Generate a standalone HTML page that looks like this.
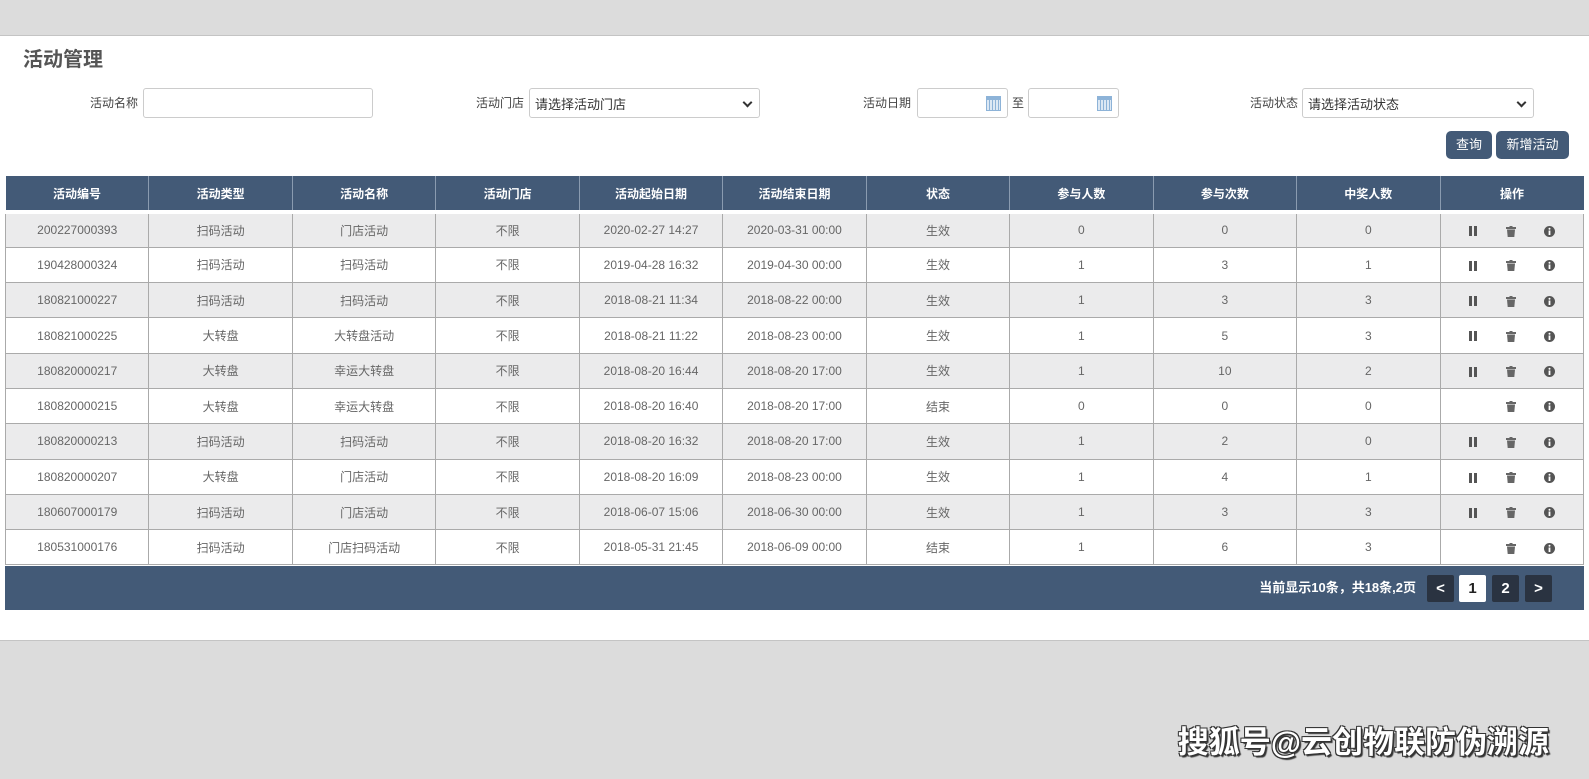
<!DOCTYPE html>
<html><head><meta charset="utf-8"><style>
*{box-sizing:border-box;margin:0;padding:0}
body{width:1589px;height:779px;background:#dcdcdc;font-family:"Liberation Sans","Noto Sans CJK SC",sans-serif;position:relative;overflow:hidden;color:#666}
.main{position:absolute;left:0;top:35px;width:1589px;height:606px;background:#fff;border-top:1px solid #c4c4c4;border-bottom:1px solid #c4c4c4}
.abs{position:absolute}
.title{left:23px;top:7px;font-size:20px;font-weight:bold;color:#555}
.lbl{font-size:12px;color:#444;top:58px}
.inp{height:30px;border:1px solid #ccc;border-radius:3px;background:#fff;top:52px}
.sel{font-size:13px;color:#333;padding:5px 5px}
.sel:after{content:"";position:absolute;right:8px;top:10px;width:5px;height:5px;border-right:2px solid #333;border-bottom:2px solid #333;transform:rotate(45deg)}
.cal{position:absolute;right:6px;top:7px;width:15px;height:15px;border:1px solid #8db3d8;background:repeating-linear-gradient(90deg,#dce8f4 0 2px,#8db3d8 2px 3px);border-top:4px solid #8db3d8}
.btn{top:95px;height:28px;background:#435a77;color:#fff;font-size:13px;border-radius:5px;text-align:center;line-height:28px}
table{position:absolute;left:5px;top:140px;width:1579px;border-collapse:collapse;table-layout:fixed}
th{background:#435a77;color:#fff;font-size:12px;font-weight:bold;height:36px;border-left:1px solid #8a9bb0;border-bottom:4px solid #fff}
td{height:35.3px;font-size:12px;color:#666;text-align:center;border:1px solid #aaa}
tbody tr:nth-child(odd) td{background:#ebebec}
.foot{left:5px;top:530px;width:1579px;height:44px;background:#435a77}
.pinfo{right:168px;top:11px;color:#fff;font-size:13px;font-weight:bold}
.pb{top:9px;width:27px;height:27px;background:#2a3341;color:#fff;font-weight:bold;font-size:15px;text-align:center;line-height:27px;border-radius:2px}
.ic{display:inline-block;vertical-align:middle;margin:0 14px}
.wm{right:40px;top:717px;font-size:31px;color:#fff;font-weight:bold;text-shadow:1px 1px 0 #333,-1px -1px 0 #333,1px -1px 0 #333,-1px 1px 0 #333,2px 2px 1px #333}
</style></head><body>
<div class="main">
<div class="abs title">活动管理</div>
<div class="abs lbl" style="left:90px">活动名称</div>
<div class="abs inp" style="left:143px;width:230px"></div>
<div class="abs lbl" style="left:476px">活动门店</div>
<div class="abs inp sel" style="left:529px;width:231px">请选择活动门店</div>
<div class="abs lbl" style="left:863px">活动日期</div>
<div class="abs inp" style="left:917px;width:91px"><span class="cal"></span></div>
<div class="abs lbl" style="left:1012px">至</div>
<div class="abs inp" style="left:1028px;width:91px"><span class="cal"></span></div>
<div class="abs lbl" style="left:1250px">活动状态</div>
<div class="abs inp sel" style="left:1302px;width:232px">请选择活动状态</div>
<div class="abs btn" style="left:1446px;width:46px">查询</div>
<div class="abs btn" style="left:1496px;width:73px">新增活动</div>
<table>
<thead><tr><th style="border-left:none">活动编号</th><th>活动类型</th><th>活动名称</th><th>活动门店</th><th>活动起始日期</th><th>活动结束日期</th><th>状态</th><th>参与人数</th><th>参与次数</th><th>中奖人数</th><th>操作</th></tr></thead>
<tbody>
<tr><td>200227000393</td><td>扫码活动</td><td>门店活动</td><td>不限</td><td>2020-02-27 14:27</td><td>2020-03-31 00:00</td><td>生效</td><td>0</td><td>0</td><td>0</td><td>P</td></tr>
<tr><td>190428000324</td><td>扫码活动</td><td>扫码活动</td><td>不限</td><td>2019-04-28 16:32</td><td>2019-04-30 00:00</td><td>生效</td><td>1</td><td>3</td><td>1</td><td>P</td></tr>
<tr><td>180821000227</td><td>扫码活动</td><td>扫码活动</td><td>不限</td><td>2018-08-21 11:34</td><td>2018-08-22 00:00</td><td>生效</td><td>1</td><td>3</td><td>3</td><td>P</td></tr>
<tr><td>180821000225</td><td>大转盘</td><td>大转盘活动</td><td>不限</td><td>2018-08-21 11:22</td><td>2018-08-23 00:00</td><td>生效</td><td>1</td><td>5</td><td>3</td><td>P</td></tr>
<tr><td>180820000217</td><td>大转盘</td><td>幸运大转盘</td><td>不限</td><td>2018-08-20 16:44</td><td>2018-08-20 17:00</td><td>生效</td><td>1</td><td>10</td><td>2</td><td>P</td></tr>
<tr><td>180820000215</td><td>大转盘</td><td>幸运大转盘</td><td>不限</td><td>2018-08-20 16:40</td><td>2018-08-20 17:00</td><td>结束</td><td>0</td><td>0</td><td>0</td><td>E</td></tr>
<tr><td>180820000213</td><td>扫码活动</td><td>扫码活动</td><td>不限</td><td>2018-08-20 16:32</td><td>2018-08-20 17:00</td><td>生效</td><td>1</td><td>2</td><td>0</td><td>P</td></tr>
<tr><td>180820000207</td><td>大转盘</td><td>门店活动</td><td>不限</td><td>2018-08-20 16:09</td><td>2018-08-23 00:00</td><td>生效</td><td>1</td><td>4</td><td>1</td><td>P</td></tr>
<tr><td>180607000179</td><td>扫码活动</td><td>门店活动</td><td>不限</td><td>2018-06-07 15:06</td><td>2018-06-30 00:00</td><td>生效</td><td>1</td><td>3</td><td>3</td><td>P</td></tr>
<tr><td>180531000176</td><td>扫码活动</td><td>门店扫码活动</td><td>不限</td><td>2018-05-31 21:45</td><td>2018-06-09 00:00</td><td>结束</td><td>1</td><td>6</td><td>3</td><td>E</td></tr>
</tbody></table>
<div class="abs foot">
<div class="abs pinfo">当前显示10条，共18条,2页</div>
<div class="abs pb" style="left:1422px">&lt;</div>
<div class="abs pb" style="left:1454px;background:#fff;color:#222">1</div>
<div class="abs pb" style="left:1487px">2</div>
<div class="abs pb" style="left:1520px">&gt;</div>
</div>
</div>
<div class="abs wm">搜狐号@云创物联防伪溯源</div>
<script>
var P='<svg class="ic" width="10" height="10" viewBox="0 0 10 10"><rect x="1" y="0" width="3" height="10" fill="#555"/><rect x="6" y="0" width="3" height="10" fill="#555"/></svg>';
var T='<svg class="ic" width="10" height="11" viewBox="0 0 10 11"><rect x="0" y="1" width="10" height="2" fill="#666"/><rect x="3.5" y="0" width="3" height="1" fill="#666"/><path d="M1 3.5h8l-.7 7.5H1.7z" fill="#666"/></svg>';
var I='<svg class="ic" width="11" height="11" viewBox="0 0 11 11"><circle cx="5.5" cy="5.5" r="5.5" fill="#555"/><rect x="4.6" y="4.5" width="1.8" height="4.5" fill="#fff"/><circle cx="5.5" cy="2.8" r="1" fill="#fff"/></svg>';
var B='<span class="ic" style="width:10px"></span>';
document.querySelectorAll('tbody tr').forEach(function(r){var c=r.lastElementChild;c.innerHTML=(c.textContent=='P'?P:B)+T+I;});
</script>
</body></html>
